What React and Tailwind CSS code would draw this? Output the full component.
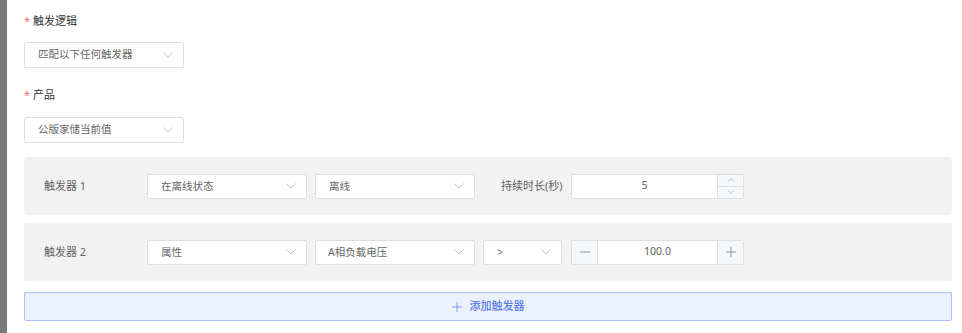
import React from 'react';

const font = "font-['Noto_Sans','Noto_Sans_CJK_SC',sans-serif]";

function Chevron({ className = '', color = '#c0c4cc' }) {
  return (
    <svg width="10" height="6" viewBox="0 0 10 6" className={className}>
      <path d="M0.5 0.5 L5 5 L9.5 0.5" fill="none" stroke={color} strokeWidth="1" />
    </svg>
  );
}

function Select({ value, w, pl = 'pl-[13px]' }) {
  return (
    <div className={`flex items-center justify-between h-[25px] bg-white border border-[#dcdfe6] rounded-[2px] ${pl} pr-[10px] ${w}`}>
      <span className="text-[10.5px] text-[#666] leading-none">{value}</span>
      <Chevron />
    </div>
  );
}

function FieldLabel({ children }) {
  return (
    <div className="flex items-center h-[16px] text-[11px] text-[#333]">
      <span className="text-[#f56c6c] mr-[3px]">*</span>
      <span>{children}</span>
    </div>
  );
}

function Panel({ label, children }) {
  return (
    <div className="flex items-center h-[58px] bg-[#f2f2f2] rounded-[4px] pl-[20px]">
      <span className="w-[103px] text-[11px] text-[#606266]">{label}</span>
      {children}
    </div>
  );
}

export default function App() {
  return (
    <div className={`flex h-[333px] w-[962px] bg-white overflow-hidden ${font}`}>
      <div className="w-[7px] shrink-0 bg-[#7a7a7a]" />
      <div className="flex-1 flex flex-col pl-[17px] pr-[10px] pt-[13px]">
        <FieldLabel>触发逻辑</FieldLabel>
        <div className="mt-[13px] flex items-center justify-between w-[160px] h-[26px] border border-[#dcdfe6] rounded-[2px] pl-[13px] pr-[10px]">
          <span className="text-[10.5px] text-[#666]">匹配以下任何触发器</span>
          <Chevron />
        </div>
        <div className="mt-[19px]">
          <FieldLabel>产品</FieldLabel>
        </div>
        <div className="mt-[14px] flex items-center justify-between w-[160px] h-[26px] border border-[#dcdfe6] rounded-[2px] pl-[13px] pr-[10px]">
          <span className="text-[10.5px] text-[#666]">公版家储当前值</span>
          <Chevron />
        </div>

        <div className="mt-[14px]">
          <Panel label="触发器 1">
            <div className="flex items-center gap-[8px]">
              <Select value="在离线状态" w="w-[160px]" />
              <Select value="离线" w="w-[160px]" />
            </div>
            <span className="ml-[26px] w-[70px] text-[11px] text-[#606266] whitespace-nowrap">持续时长(秒)</span>
            <div className="flex h-[25px] w-[173px] bg-white border border-[#dcdfe6] rounded-[2px]">
              <div className="flex-1 flex items-center justify-center text-[10.5px] text-[#606266]">5</div>
              <div className="w-[26px] flex flex-col border-l border-[#dcdfe6] bg-[#f5f7fa]">
                <div className="flex-1 flex items-center justify-center border-b border-[#dcdfe6]">
                  <Chevron className="rotate-180 scale-75" color="#a8abb2" />
                </div>
                <div className="flex-1 flex items-center justify-center">
                  <Chevron className="scale-75" color="#a8abb2" />
                </div>
              </div>
            </div>
          </Panel>
        </div>

        <div className="mt-[8px]">
          <Panel label="触发器 2">
            <div className="flex items-center gap-[8px]">
              <Select value="属性" w="w-[160px]" />
              <Select value="A相负载电压" w="w-[160px]" pl="pl-[12px]" />
              <Select value=">" w="w-[79px]" pl="pl-[13px]" />
            </div>
            <div className="ml-[9px] flex h-[25px] w-[173px] bg-white border border-[#dcdfe6] rounded-[2px]">
              <div className="w-[26px] flex items-center justify-center border-r border-[#dcdfe6] bg-[#f5f7fa]">
                <svg width="10" height="10" viewBox="0 0 10 10">
                  <path d="M0 5 H10" stroke="#909399" strokeWidth="1" />
                </svg>
              </div>
              <div className="flex-1 flex items-center justify-center text-[10.5px] text-[#606266]">100.0</div>
              <div className="w-[26px] flex items-center justify-center border-l border-[#dcdfe6] bg-[#f5f7fa]">
                <svg width="10" height="10" viewBox="0 0 10 10">
                  <path d="M0 5 H10 M5 0 V10" stroke="#909399" strokeWidth="1" />
                </svg>
              </div>
            </div>
          </Panel>
        </div>

        <div className="mt-[11px] flex items-center justify-center h-[29px] bg-[#ebf1fd] border border-[#a9c0f9] rounded-[2px] text-[11px] text-[#5a7de6]">
          <svg width="10" height="10" viewBox="0 0 10 10" className="mr-[8px]">
            <path d="M0 5 H10 M5 0 V10" stroke="#7f9cec" strokeWidth="1" />
          </svg>
          <span className="font-medium">添加触发器</span>
        </div>
      </div>
    </div>
  );
}
